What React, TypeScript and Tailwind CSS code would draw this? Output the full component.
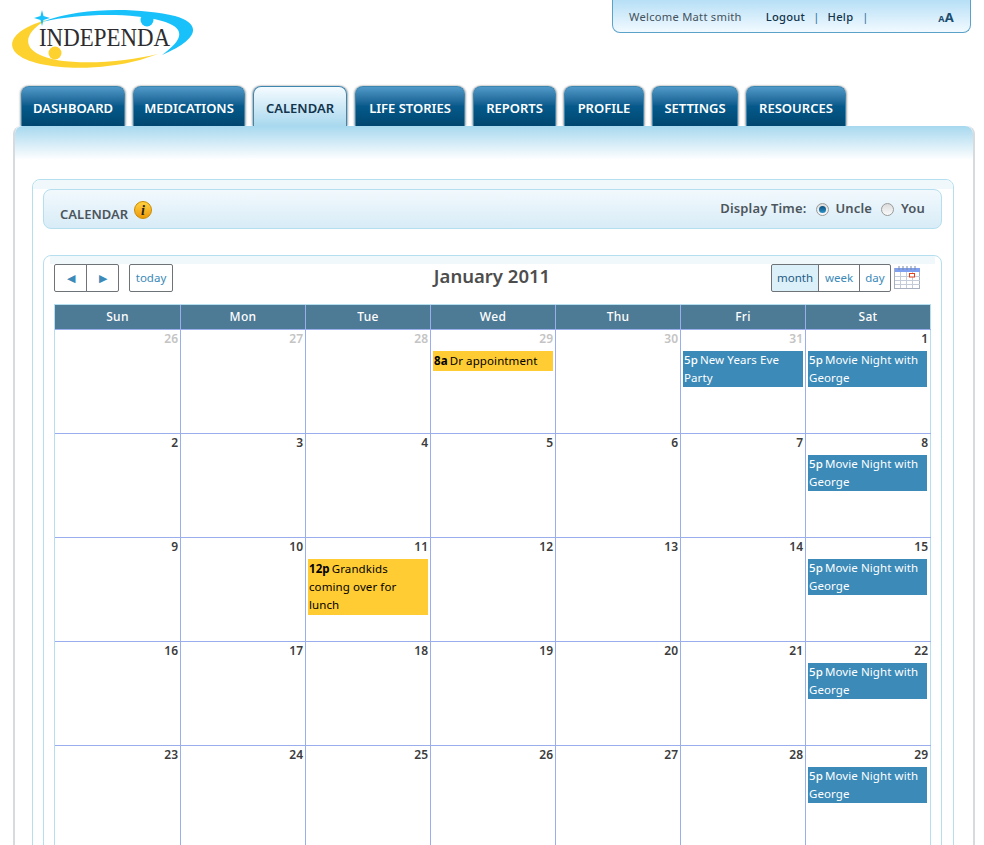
import React from "react";

type CalEvent = { time: string; title: string; kind: "yellow" | "blue"; width: string };
type Day = { num: number; muted?: boolean; event?: CalEvent };

const tabs = [
  { label: "DASHBOARD", width: "w-[104px]" },
  { label: "MEDICATIONS", width: "w-[112px]" },
  { label: "CALENDAR", width: "w-[94px]", active: true },
  { label: "LIFE STORIES", width: "w-[110px]" },
  { label: "REPORTS", width: "w-[83px]" },
  { label: "PROFILE", width: "w-[80px]" },
  { label: "SETTINGS", width: "w-[86px]" },
  { label: "RESOURCES", width: "w-[100px]" },
];

const dayNames = ["Sun", "Mon", "Tue", "Wed", "Thu", "Fri", "Sat"];

const movie: CalEvent = { time: "5p", title: "Movie Night with George", kind: "blue", width: "w-[119px]" };

const weeks: Day[][] = [
  [
    { num: 26, muted: true },
    { num: 27, muted: true },
    { num: 28, muted: true },
    { num: 29, muted: true, event: { time: "8a", title: "Dr appointment", kind: "yellow", width: "w-[120px]" } },
    { num: 30, muted: true },
    { num: 31, muted: true, event: { time: "5p", title: "New Years Eve Party", kind: "blue", width: "w-[120px]" } },
    { num: 1, event: movie },
  ],
  [{ num: 2 }, { num: 3 }, { num: 4 }, { num: 5 }, { num: 6 }, { num: 7 }, { num: 8, event: movie }],
  [
    { num: 9 },
    { num: 10 },
    { num: 11, event: { time: "12p", title: "Grandkids coming over for lunch", kind: "yellow", width: "w-[120px]" } },
    { num: 12 },
    { num: 13 },
    { num: 14 },
    { num: 15, event: movie },
  ],
  [{ num: 16 }, { num: 17 }, { num: 18 }, { num: 19 }, { num: 20 }, { num: 21 }, { num: 22, event: movie }],
  [{ num: 23 }, { num: 24 }, { num: 25 }, { num: 26 }, { num: 27 }, { num: 28 }, { num: 29, event: movie }],
];

const Logo = () => (
  <svg width="184" height="62" viewBox="0 0 184 62">
    <path d="M30 15 C70 -1 130 1 163 9 C188 16 190 31 150 48 C172 32 174 21 150 14 C120 6 70 6 30 15 Z" fill="#19c1fb" />
    <path d="M34 13 C3 22 -6 36 4 46 C20 62 80 66 128 53 L146 47 C110 56 50 60 26 47 C10 38 14 25 34 13 Z" fill="#fdd22f" />
    <circle cx="135" cy="13" r="6.5" fill="#19c1fb" />
    <circle cx="43" cy="46" r="6.5" fill="#fdd22f" />
    <path d="M30 3 L31.5 9 L38 11 L31.5 13 L30 19 L28.5 13 L22 11 L28.5 9 Z" fill="#19c1fb" />
    <text x="27" y="39" fontFamily="'Liberation Serif', serif" fontSize="25.5" fill="#2d2d2f" textLength="131" lengthAdjust="spacingAndGlyphs">
      INDEPENDA
    </text>
  </svg>
);

const CalendarIcon = () => (
  <svg width="27" height="24" viewBox="0 0 27 24" className="mt-[1px]">
    <rect x="0.5" y="3.5" width="25" height="20" fill="#fff" stroke="#a6b0c0" />
    <rect x="1" y="3" width="25" height="4" fill="#7f9ff0" />
    <path d="M1 11.5H26M1 15.5H26M1 19.5H26M6.5 7V23M12.5 7V23M18.5 7V23" stroke="#c3ccd8" fill="none" />
    <path d="M5 1V5M9 1V5M13 1V5M17 1V5M21 1V5" stroke="#7a8aa0" fill="none" />
    <rect x="15.5" y="8.5" width="5" height="3.5" fill="#fff" stroke="#e2401c" />
  </svg>
);

const Radio = ({ checked }: { checked?: boolean }) => (
  <span className="flex h-[13px] w-[13px] items-center justify-center rounded-full border border-[#9a9a9a] bg-gradient-to-b from-[#dcdcdc] to-[#fafafa]">
    {checked && <span className="h-[7px] w-[7px] rounded-full bg-gradient-to-b from-[#0d4f7e] to-[#2b93c9]" />}
  </span>
);

const EventBar = ({ event }: { event: CalEvent }) => (
  <div
    className={`${event.width} ${
      event.kind === "yellow" ? "bg-[#ffcc33] py-px text-black" : "bg-[#3b8ab8] text-white"
    } ml-[2px] px-px text-[11.5px] leading-[18px] tracking-[0.1px]`}
  >
    <span className={`mr-[2px] ${event.kind === "yellow" ? "font-bold" : "font-medium"}`}>{event.time}</span>
    {event.title}
  </div>
);

export default function App() {
  return (
    <div className="h-[845px] overflow-hidden bg-white font-['Noto_Sans',sans-serif]">
      {/* Logo + account box */}
      <div className="flex h-[86px] justify-between pl-[12px] pr-[13px]">
        <div className="pt-[7px]">
          <Logo />
        </div>
        <div className="flex h-[33px] w-[359px] items-center rounded-b-lg border border-t-0 border-[#5ba2c8] bg-gradient-to-b from-[#b6dff6] to-[#f2faff] pl-[16px] pr-[16px] pt-[3px] text-[11.2px] tracking-[0.25px]">
          <span className="text-[#44525c]">Welcome Matt smith</span>
          <span className="ml-[24px] font-medium text-[#12344c]">Logout</span>
          <span className="mx-[8px] text-[#2f6f98]">|</span>
          <span className="font-medium text-[#12344c]">Help</span>
          <span className="ml-[9px] text-[#2f6f98]">|</span>
          <span className="ml-auto font-bold text-[#1c4d70]">
            <span className="text-[9px]">A</span>
            <span className="text-[13px]">A</span>
          </span>
        </div>
      </div>

      {/* Tabs */}
      <div className="flex h-[40px] gap-[8px] pl-[21px]">
        {tabs.map((tab) => (
          <div
            key={tab.label}
            className={`${tab.width} flex h-[40px] items-center justify-center rounded-t-lg border border-b-0 border-[#3d86b0] pt-[4px] text-[13px] font-semibold shadow-[1px_0_2px_#aaa,-1px_0_2px_#aaa] ${
              tab.active
                ? "bg-gradient-to-b from-[#f4fbff] to-[#a9d8ee] text-[#12344c]"
                : "bg-gradient-to-b from-[#509ac9] via-[#05598a] to-[#004770] text-white"
            }`}
          >
            {tab.label}
          </div>
        ))}
      </div>

      {/* Main panel */}
      <div className="relative ml-[13px] w-[962px] rounded-t-lg border-x-2 border-[#d8dbde] bg-white">
        <div className="h-[34px] rounded-t-lg bg-gradient-to-b from-[#a6d8ee] to-white" />
        <div className="ml-[17px] mt-[19px] w-[922px] rounded-t-lg border border-[#b5dfef] bg-white">
          <div className="h-[9px] rounded-t-lg bg-[#f0f8fc]" />
          <div className="mx-[10px] flex h-[40px] w-[899px] items-center justify-between rounded-lg border border-[#b5dfef] bg-gradient-to-b from-[#f2f9fd] to-[#d8ecf7] pl-[16px] pr-[16px]">
            <div className="flex items-center text-[13px] font-semibold text-[#4d555c]">
              <span className="mt-[12px]">CALENDAR</span>
              <span className="ml-[6px] mt-[2px] flex h-[18px] w-[18px] items-center justify-center rounded-full border border-[#c98a00] bg-gradient-to-b from-[#ffd23f] to-[#ec9a00] font-['Liberation_Serif',serif] text-[14px] font-bold italic text-[#222]">
                i
              </span>
            </div>
            <div className="flex items-center text-[13px] font-semibold tracking-[0.15px] text-[#4d555c]">
              <span>Display Time:</span>
              <span className="ml-[10px]">
                <Radio checked />
              </span>
              <span className="ml-[6px]">Uncle</span>
              <span className="ml-[9px]">
                <Radio />
              </span>
              <span className="ml-[7px]">You</span>
            </div>
          </div>

          {/* Calendar box */}
          <div className="ml-[10px] mt-[26px] w-[899px] rounded-t-lg border border-[#b5dfef] bg-white">
            <div className="mx-[6px] h-[8px] bg-[#f0f8fc]" />
            <div className="relative flex h-[40px] justify-between pl-[10px] pr-[20px]">
              <div className="flex h-[28px] text-[11.5px] text-[#3b8ab8]">
                <div className="flex w-[33px] items-center justify-center rounded-l-[2px] border border-[#6e7378] text-[11px]">◀</div>
                <div className="-ml-px flex w-[33px] items-center justify-center rounded-r-[2px] border border-[#6e7378] text-[11px]">▶</div>
                <div className="ml-[10px] flex w-[44px] items-center justify-center rounded-[2px] border border-[#6e7378]">today</div>
              </div>
              <div className="absolute left-0 right-[1px] top-[-2px] text-center text-[18.5px] font-semibold leading-[28px] text-[#4d4d4d]">
                January 2011
              </div>
              <div className="flex h-[28px] text-[11.5px] text-[#3b8ab8]">
                <div className="flex w-[48px] items-center justify-center rounded-l-[2px] border border-[#6e7378] bg-[#dcf0fa] text-[#1f5c82]">month</div>
                <div className="-ml-px flex w-[42px] items-center justify-center border border-[#6e7378]">week</div>
                <div className="-ml-px flex w-[32px] items-center justify-center rounded-r-[2px] border border-[#6e7378]">day</div>
                <div className="ml-[3px]">
                  <CalendarIcon />
                </div>
              </div>
            </div>

            {/* Month grid */}
            <div className="ml-[10px] w-[877px] border border-r-0 border-[#b5dfef]">
              <div className="grid grid-cols-[126px_repeat(6,125px)] bg-[#4d7a95] text-center text-[12px] font-medium leading-[24px] tracking-[0.3px] text-white">
                {dayNames.map((name, i) => (
                  <div key={name} className={`h-[24px] ${i < 6 ? "border-r border-[#9aaeee]" : "border-r border-[#b5dfef]"}`}>
                    {name}
                  </div>
                ))}
              </div>
              {weeks.map((week) => (
                <div key={week[0].num} className="grid grid-cols-[126px_repeat(6,125px)] border-t border-[#9aaeee]">
                  {week.map((day, i) => (
                    <div
                      key={day.num}
                      className={`h-[103px] ${i < 6 ? "border-r border-[#9aaeee]" : "border-r border-[#b5dfef]"}`}
                    >
                      <div
                        className={`h-[21px] pr-[2px] text-right text-[12px] font-semibold leading-[18px] ${
                          day.muted ? "text-[#c4c4c4]" : "text-[#3c3c3c]"
                        }`}
                      >
                        {day.num}
                      </div>
                      {day.event && <EventBar event={day.event} />}
                    </div>
                  ))}
                </div>
              ))}
            </div>
          </div>
        </div>
      </div>
    </div>
  );
}
